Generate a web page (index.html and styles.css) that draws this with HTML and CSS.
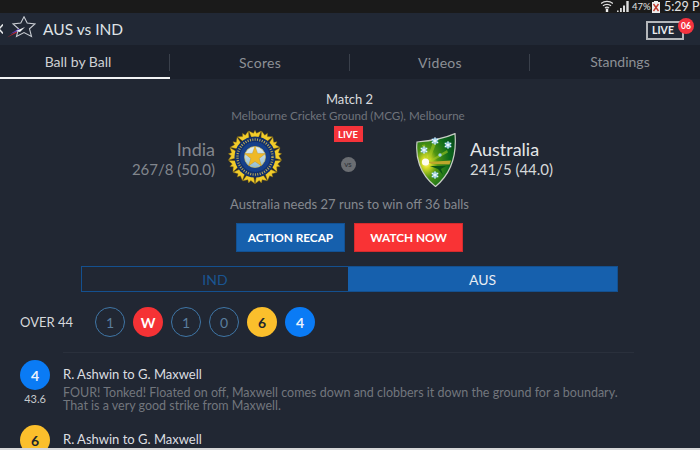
FILE: index.html
```html
<!DOCTYPE html>
<html lang="en">
<head>
<meta charset="utf-8">
<title>AUS vs IND</title>
<link rel="stylesheet" href="styles.css">
</head>
<body>
<div class="app">
  <div class="status">
    <svg class="st-wifi" width="12" height="12" viewBox="0 0 12 12"><path d="M0 3.5C3.2.6 8.8.6 12 3.5M2 5.8c2.2-2 5.8-2 8 0M4 8c1.1-1 2.9-1 4 0" fill="none" stroke="#ddd" stroke-width="1.3"/><rect x="4.8" y="8.6" width="2.4" height="3.4" fill="#eee"/></svg>
    <svg class="st-signal" width="13" height="11" viewBox="0 0 13 11"><path d="M0 11h1.6V9.400H0zM3 11h1.800V7H3zM6 11h2V4.500H6zM9.300 11h2.400V0H9.300z" fill="#ddd"/></svg>
    <span class="st-pct">47%</span>
    <svg class="st-bat" width="8" height="12" viewBox="0 0 8 12"><rect y="1" width="8" height="11" fill="#eee"/><rect x="2" width="4" height="1" fill="#eee"/><path d="M1.500 3l5 7M6.500 3l-5 7" stroke="#c0392b" stroke-width="1.400"/></svg>
    <span class="st-time">5:29 PM</span>
  </div>

  <header class="head">
    <svg class="back" width="3" height="10" viewBox="0 0 3 10"><path d="M3 .5L-1 5l4 4.500" fill="none" stroke="#e4e6e8" stroke-width="1.600"/></svg>
    <svg class="logo" width="30" height="26" viewBox="0 0 30 26">
      <path d="M18 .8L21.200 7 29 8l-5.500 4.800 2 7.700L18 16.500l-7.500 4 2-7.700L7 8l7.800-1z" fill="none" stroke="#c8ccd2" stroke-width="1.100"/>
      <path d="M1 21.500L10 15.500l1 1z" fill="#c1272d"/>
      <path d="M4 18L13 12.500l1 2z" fill="#5b3fb5"/>
      <path d="M10 15l9-4-5 5z" fill="#f1f3f6"/>
    </svg>
    <h1 class="title">AUS vs IND</h1>
    <div class="live-box">LIVE<span class="live-count">06</span></div>
  </header>

  <nav class="tabs">
    <div class="tab tab-first">Ball by Ball</div>
    <div class="tab">Scores</div>
    <div class="tab">Videos</div>
    <div class="tab">Standings</div>
  </nav>

  <main class="main">
    <section class="match">
      <div class="match-name">Match 2</div>
      <div class="venue">Melbourne Cricket Ground (MCG), Melbourne</div>
      <div class="teams">
        <div class="team team-left">
          <div class="team-text">
            <div class="team-name dim">India</div>
            <div class="team-score dim">267/8 (50.0)</div>
          </div>
          <svg class="crest" width="54" height="54" viewBox="-27 -27 54 54">
            <defs>
              <path id="petal" d="M-3.500-19.500L-6.200-26-1.500-23.800 0-26.800 1.500-23.800 6.200-26 3.500-19.500z" fill="#f2cc2a" stroke="#8a6d10" stroke-width=".4"/>
              <linearGradient id="ball" x1="0" y1="0" x2="0" y2="1"><stop offset="0" stop-color="#e4f0f6"/><stop offset="1" stop-color="#8fbcd4"/></linearGradient>
            </defs>
            <use href="#petal"/><use href="#petal" transform="rotate(27.700)"/><use href="#petal" transform="rotate(55.400)"/><use href="#petal" transform="rotate(83.100)"/><use href="#petal" transform="rotate(110.800)"/><use href="#petal" transform="rotate(138.500)"/><use href="#petal" transform="rotate(166.200)"/><use href="#petal" transform="rotate(193.800)"/><use href="#petal" transform="rotate(221.500)"/><use href="#petal" transform="rotate(249.200)"/><use href="#petal" transform="rotate(276.900)"/><use href="#petal" transform="rotate(304.600)"/><use href="#petal" transform="rotate(332.300)"/>
            <circle r="20.500" fill="#12306b"/>
            <circle r="17.500" fill="none" stroke="#b8a95a" stroke-width="2.400" stroke-dasharray="1 1.400"/>
            <circle r="15" fill="#16408a"/>
            <circle r="10.500" fill="url(#ball)" stroke="#d8c35a" stroke-width=".7"/>
            <path d="M0-11L2.600-3.600 10.500-3.400 4.200 1.400 6.500 8.900 0 4.500-6.500 8.900-4.200 1.400-10.500-3.400-2.600-3.600z" fill="#efb926" stroke="#a37a10" stroke-width=".3"/>
          </svg>
        </div>
        <div class="middle">
          <span class="live-tag">LIVE</span>
          <span class="vs">VS</span>
        </div>
        <div class="team team-right">
          <svg class="shield" width="40" height="54" viewBox="0 0 40 54">
            <defs>
              <radialGradient id="sh" cx=".25" cy=".55" r=".8"><stop offset="0" stop-color="#fffbd0"/><stop offset=".12" stop-color="#dfe02a"/><stop offset=".36" stop-color="#4f9412"/><stop offset=".75" stop-color="#0c6a1c"/><stop offset="1" stop-color="#08501a"/></radialGradient>
              <g id="burst"><circle r="3.200" fill="#5fb2e6" opacity=".7"/><path d="M0-3.800V3.800M-3.300-1.900L3.300 1.900M-3.300 1.900L3.300-1.900" stroke="#e8f6ff" stroke-width="1.100"/></g>
            </defs>
            <path d="M1 9C13 8 28 5.500 39 .6 40.500 18 37 39 19.500 53.500 3 41-.5 23 1 9z" fill="url(#sh)" stroke="#c9cdc6" stroke-width="1.200"/>
            <path d="M10 29L17 9l3 2-7 18zM11 29L31 17l1 2.500-19 10.500zM10 29L6 12l3-.5 3 17z" fill="#a9cc22" opacity=".55"/>
            <path d="M11 29l24-1.500-1.500 4L16 31z" fill="#bda72c"/>
            <path d="M14 33l16 0-5 3 2 6-5-6z" fill="#0a5318"/>
            <circle cx="9.500" cy="29" r="3.600" fill="#fffdf0"/>
            <use href="#burst" x="19" y="8"/><use href="#burst" x="32" y="12"/><use href="#burst" x="8" y="17"/><use href="#burst" x="19" y="42"/>
            <circle cx="24" cy="22" r="1.700" fill="#9ed4f2"/>
          </svg>
          <div class="team-text">
            <div class="team-name">Australia</div>
            <div class="team-score">241/5 (44.0)</div>
          </div>
        </div>
      </div>
      <div class="need">Australia needs 27 runs to win off 36 balls</div>
      <div class="actions">
        <button class="btn btn-blue">ACTION RECAP</button>
        <button class="btn btn-red">WATCH NOW</button>
      </div>
      <div class="toggle">
        <div class="tg">IND</div>
        <div class="tg tg-on">AUS</div>
      </div>
    </section>

    <section class="over">
      <span class="over-label">OVER 44</span>
      <div class="balls">
        <span class="ball ball-o">1</span>
        <span class="ball ball-w">W</span>
        <span class="ball ball-o">1</span>
        <span class="ball ball-o">0</span>
        <span class="ball ball-6">6</span>
        <span class="ball ball-4">4</span>
      </div>
    </section>

    <div class="rule"></div>

    <section class="comm">
      <article class="item">
        <div class="item-side">
          <span class="ball ball-4">4</span>
          <span class="item-over">43.6</span>
        </div>
        <div class="item-body">
          <div class="item-title">R. Ashwin to G. Maxwell</div>
          <p class="item-desc">FOUR! Tonked! Floated on off, Maxwell comes down and clobbers it down the ground for a boundary.<br>That is a very good strike from Maxwell.</p>
        </div>
      </article>
      <article class="item">
        <div class="item-side">
          <span class="ball ball-6">6</span>
        </div>
        <div class="item-body">
          <div class="item-title">R. Ashwin to G. Maxwell</div>
        </div>
      </article>
    </section>
  </main>
  <div class="edge"></div>
</div>
</body>
</html>
```
FILE: styles.css
```css
* { box-sizing: border-box; }
html, body { margin: 0; padding: 0; }
body { width: 700px; height: 450px; overflow: hidden; background: #212733; font-family: "Lato", "Liberation Sans", sans-serif; }
.app { width: 700px; height: 450px; display: flex; flex-direction: column; overflow: hidden; }

.status { height: 13px; flex: none; background: #1a1a1a; display: flex; align-items: center; justify-content: flex-start; padding-left: 601px; white-space: nowrap; overflow: hidden; color: #e2e2e2; }
.st-wifi { flex: none; margin-right: 4px; margin-top: -1px; }
.st-signal { flex: none; margin-right: 2px; margin-top: -1px; }
.st-pct { font-size: 9.500px; width: 20px; flex: none; }
.st-bat { flex: none; margin-right: 4px; }
.st-time { font-size: 12.500px; line-height: 13px; flex: none; }

.head { height: 32px; flex: none; background: #212835; display: flex; align-items: center; }
.back { flex: none; }
.logo { flex: none; margin-left: 3px; }
.title { margin: 0 0 0 7px; font-size: 15.500px; font-weight: 400; color: #dfe2e5; }
.live-box { margin-left: auto; margin-right: 16px; margin-top: 2px; position: relative; width: 38px; height: 19px; border: 2px solid #b4b7bb; color: #eceef0; font-size: 10.500px; font-weight: 700; display: flex; align-items: center; justify-content: center; padding-right: 4px; }
.live-count { position: absolute; right: -12px; top: -5px; width: 16px; height: 16px; border-radius: 50%; background: #f5333f; color: #fff; font-size: 8.500px; font-weight: 700; display: flex; align-items: center; justify-content: center; }

.tabs { height: 34px; flex: none; background: #1b202b; display: flex; }
.tab { width: 180px; height: 34px; padding-top: 9px; text-align: center; font-size: 14px; line-height: 18px; color: #8d9096; position: relative; letter-spacing: .3px; }
.tab::after { content: ""; position: absolute; right: 0; top: 9px; height: 17px; width: 1px; background: #3a404b; }
.tab:last-child::after { display: none; }
.tab-first { width: 170px; padding-top: 8px; padding-right: 14px; color: #cfd1d4; border-bottom: 2px solid #f2f3f4; letter-spacing: 0; }
.tab:last-child { width: 170px; padding-top: 8px; padding-left: 10px; padding-right: 0; letter-spacing: 0; }

.main { flex: 1; min-height: 0; }
.match { display: flex; flex-direction: column; align-items: center; padding-top: 11px; padding-right: 4px; }
.match-name { font-size: 13px; line-height: 18px; color: #d9dbde; margin-left: 3px; }
.venue { font-size: 11.600px; line-height: 15px; color: #70747c; }
.teams { display: grid; grid-template-columns: 1fr 62px 1fr; width: 100%; height: 66px; margin-top: 3px; }
.team { display: flex; align-items: flex-start; padding-top: 4px; }
.team-left { justify-content: flex-end; gap: 13px; padding-right: 35px; }
.team-right { gap: 14px; padding-left: 37px; }
.team-text { padding-top: 9px; }
.shield { margin-top: 3px; }
.team-name { font-size: 18px; line-height: 21px; color: #e4e6e8; }
.team-score { font-size: 15px; line-height: 18px; color: #d5d8da; }
.dim { color: #82868d; text-align: right; }
.middle { display: flex; flex-direction: column; align-items: center; }
.live-tag { width: 29px; height: 16px; background: #f5333a; color: #fff; font-size: 9.500px; font-weight: 700; display: flex; align-items: center; justify-content: center; }
.vs { width: 15px; height: 15px; margin-top: 15px; border-radius: 50%; background: #6a6d72; color: #35383e; font-size: 6px; font-weight: 700; display: flex; align-items: center; justify-content: center; }
.need { margin-top: 3px; margin-left: 3px; font-size: 13px; line-height: 18px; color: #85898f; }
.actions { display: flex; gap: 9px; margin-top: 10px; margin-left: 3px; }
.btn { height: 29px; border: 1px solid rgba(0,0,0,.15); padding: 0; color: #fff; font: 700 11.800px/1 "Lato", "Liberation Sans", sans-serif; }
.btn-blue { width: 109px; background: #1660ad; }
.btn-red { width: 109px; background: #f93335; }
.toggle { width: 537px; height: 26px; margin-top: 14px; margin-right: -3px; border: 1.500px solid #14508f; display: flex; }
.tg { flex: 1; display: flex; align-items: center; justify-content: center; font-size: 14px; color: #1a5592; }
.tg-on { flex: none; width: 269px; background: #1660ad; color: #e8edf3; }

.over { display: flex; align-items: center; padding-left: 20px; margin-top: 15px; }
.over-label { width: 75px; flex: none; font-size: 13px; color: #d6d8db; }
.balls { display: flex; gap: 8px; }
.ball { width: 30px; height: 30px; flex: none; border-radius: 50%; display: flex; align-items: center; justify-content: center; font-size: 14px; font-weight: 700; }
.ball-o { border: 1.500px solid #3f76a6; color: #5a7e9e; font-weight: 400; }
.ball-w { background: #f53235; color: #fff; }
.ball-6 { background: #fbbf2c; color: #20242c; }
.ball-4 { background: #0a7bf5; color: #e9f2fc; }

.rule { height: 1px; margin: 15px 66px 0 63px; background: #2a303c; }
.comm { padding-left: 20px; padding-top: 7px; }
.item { display: flex; height: 65px; }
.item-side { width: 43px; flex: none; display: flex; flex-direction: column; }
.item-over { width: 30px; margin-top: 2px; text-align: center; font-size: 11px; line-height: 14px; color: #c6c9cc; }
.item-body { padding-top: 5px; }
.item-title { font-size: 13px; line-height: 18px; color: #dcdee1; }
.item-desc { margin: 3px 0 0; font-size: 12.500px; line-height: 13px; color: #72767d; white-space: nowrap; }
.edge { height: 2px; flex: none; background: #d8d9da; }
```
